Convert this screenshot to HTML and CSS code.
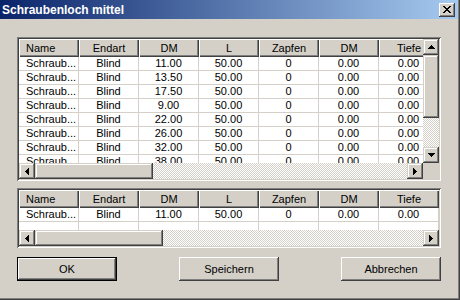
FILE: index.html
```html
<!DOCTYPE html>
<html>
<head>
<meta charset="utf-8">
<link rel="stylesheet" href="styles.css">
</head>
<body>
<div class="window">
  <div class="window-inner">
    <div class="titlebar">
      <span class="title">Schraubenloch mittel</span>
      <button class="close" aria-label="Schließen">
        <svg width="8" height="7" viewBox="0 0 8 7" shape-rendering="crispEdges"><path d="M0 0h2v1h-2zM6 0h2v1h-2zM1 1h2v1h-2zM5 1h2v1h-2zM2 2h4v1h-4zM3 3h2v1h-2zM2 4h4v1h-4zM1 5h2v1h-2zM5 5h2v1h-2zM0 6h2v1h-2zM6 6h2v1h-2z" fill="#000"/></svg>
      </button>
    </div>
    <div class="content">
      <div class="frame frame-top">
        <div class="data">
          <div class="row head">
            <div class="hcell left">Name</div><div class="hcell">Endart</div><div class="hcell">DM</div><div class="hcell">L</div><div class="hcell">Zapfen</div><div class="hcell">DM</div><div class="hcell">Tiefe</div>
          </div>
          <div class="row"><div class="cell left">Schraub...</div><div class="cell">Blind</div><div class="cell">11.00</div><div class="cell">50.00</div><div class="cell">0</div><div class="cell">0.00</div><div class="cell">0.00</div></div>
          <div class="row"><div class="cell left">Schraub...</div><div class="cell">Blind</div><div class="cell">13.50</div><div class="cell">50.00</div><div class="cell">0</div><div class="cell">0.00</div><div class="cell">0.00</div></div>
          <div class="row"><div class="cell left">Schraub...</div><div class="cell">Blind</div><div class="cell">17.50</div><div class="cell">50.00</div><div class="cell">0</div><div class="cell">0.00</div><div class="cell">0.00</div></div>
          <div class="row"><div class="cell left">Schraub...</div><div class="cell">Blind</div><div class="cell">9.00</div><div class="cell">50.00</div><div class="cell">0</div><div class="cell">0.00</div><div class="cell">0.00</div></div>
          <div class="row"><div class="cell left">Schraub...</div><div class="cell">Blind</div><div class="cell">22.00</div><div class="cell">50.00</div><div class="cell">0</div><div class="cell">0.00</div><div class="cell">0.00</div></div>
          <div class="row"><div class="cell left">Schraub...</div><div class="cell">Blind</div><div class="cell">26.00</div><div class="cell">50.00</div><div class="cell">0</div><div class="cell">0.00</div><div class="cell">0.00</div></div>
          <div class="row"><div class="cell left">Schraub...</div><div class="cell">Blind</div><div class="cell">32.00</div><div class="cell">50.00</div><div class="cell">0</div><div class="cell">0.00</div><div class="cell">0.00</div></div>
          <div class="row"><div class="cell left">Schraub...</div><div class="cell">Blind</div><div class="cell">38.00</div><div class="cell">50.00</div><div class="cell">0</div><div class="cell">0.00</div><div class="cell">0.00</div></div>
        </div>
        <div class="vscroll">
          <div class="sbtn"><svg width="7" height="4" viewBox="0 0 7 4" shape-rendering="crispEdges"><path d="M3 0h1v1h1v1h1v1h1v1H0v-1h1v-1h1v-1h1z" fill="#000"/></svg></div>
          <div class="thumb thumb-v"></div>
          <div class="track"></div>
          <div class="sbtn"><svg width="7" height="4" viewBox="0 0 7 4" shape-rendering="crispEdges"><path d="M0 0h7v1h-1v1h-1v1h-1v1h-1v-1h-1v-1h-1v-1H0z" fill="#000"/></svg></div>
        </div>
        <div class="hscroll">
          <div class="sbtn"><svg width="4" height="7" viewBox="0 0 4 7" shape-rendering="crispEdges"><path d="M3 0h1v7h-1v-1h-1v-1h-1v-1H0v-1h1v-1h1v-1h1z" fill="#000"/></svg></div>
          <div class="thumb thumb-h1"></div>
          <div class="track"></div>
          <div class="sbtn"><svg width="4" height="7" viewBox="0 0 4 7" shape-rendering="crispEdges"><path d="M0 0h1v1h1v1h1v1h1v1h-1v1h-1v1h-1v1H0z" fill="#000"/></svg></div>
        </div>
        <div class="corner"></div>
      </div>

      <div class="frame frame-bottom">
        <div class="data">
          <div class="row head">
            <div class="hcell left">Name</div><div class="hcell">Endart</div><div class="hcell">DM</div><div class="hcell">L</div><div class="hcell">Zapfen</div><div class="hcell">DM</div><div class="hcell">Tiefe</div>
          </div>
          <div class="row"><div class="cell left">Schraub...</div><div class="cell">Blind</div><div class="cell">11.00</div><div class="cell">50.00</div><div class="cell">0</div><div class="cell">0.00</div><div class="cell">0.00</div></div>
          <div class="row"><div class="cell left"></div><div class="cell"></div><div class="cell"></div><div class="cell"></div><div class="cell"></div><div class="cell"></div><div class="cell"></div></div>
        </div>
        <div class="hscroll">
          <div class="sbtn"><svg width="4" height="7" viewBox="0 0 4 7" shape-rendering="crispEdges"><path d="M3 0h1v7h-1v-1h-1v-1h-1v-1H0v-1h1v-1h1v-1h1z" fill="#000"/></svg></div>
          <div class="thumb thumb-h2"></div>
          <div class="track"></div>
          <div class="sbtn"><svg width="4" height="7" viewBox="0 0 4 7" shape-rendering="crispEdges"><path d="M0 0h1v1h1v1h1v1h1v1h-1v1h-1v1h-1v1H0z" fill="#000"/></svg></div>
        </div>
      </div>

      <div class="buttons">
        <button class="btn btn-default">OK</button>
        <button class="btn">Speichern</button>
        <button class="btn">Abbrechen</button>
      </div>
    </div>
  </div>
</div>
</body>
</html>
```

FILE: styles.css
```css
* { box-sizing: border-box; }
html, body { margin: 0; padding: 0; }
body {
  width: 460px;
  height: 300px;
  overflow: hidden;
  background: #d4d0c8;
  font-family: "Liberation Sans", Arial, sans-serif;
  font-size: 11px;
  color: #000;
}
.window {
  width: 460px;
  height: 300px;
  background: #d4d0c8;
  border-right: 1px solid #404040;
  border-bottom: 1px solid #404040;
}
.window-inner {
  height: 100%;
  border-right: 1px solid #808080;
  border-bottom: 1px solid #808080;
  display: flex;
  flex-direction: column;
}
.titlebar {
  height: 19px;
  flex: none;
  display: flex;
  align-items: center;
  justify-content: space-between;
  padding: 0 3px 0 2px;
  background: linear-gradient(to right, #0a246a, #a6caf0);
}
.title {
  color: #fff;
  font-weight: bold;
  font-size: 12px;
  white-space: nowrap;
}
.close {
  width: 16px;
  height: 14px;
  padding: 0;
  border: 0;
  background: #d4d0c8;
  display: flex;
  align-items: center;
  justify-content: center;
  box-shadow: inset -1px -1px #404040, inset 1px 1px #fff, inset -2px -2px #808080, inset 2px 2px #d4d0c8;
}
.close svg { display: block; margin-left: -1px; }
.content {
  flex: 1;
  padding: 18px 17px 0 17px;
  display: flex;
  flex-direction: column;
}
.frame {
  padding: 2px;
  background: #fff;
  box-shadow: inset 1px 1px #808080, inset -1px -1px #fff, inset 2px 2px #404040, inset -2px -2px #d4d0c8;
  display: grid;
}
.frame-top {
  height: 144px;
  grid-template-columns: 1fr 16px;
  grid-template-rows: 1fr 16px;
}
.frame-bottom {
  height: 60px;
  margin-top: 7px;
  grid-template-columns: 1fr;
  grid-template-rows: 1fr 16px;
}
.data {
  overflow: hidden;
  background: #fff;
  min-width: 0;
}
.row {
  display: grid;
  grid-template-columns: repeat(7, 60px);
  width: 420px;
  height: 14px;
}
.row.head { height: 18px; }
.hcell {
  background: #d4d0c8;
  line-height: 18px;
  text-align: center;
  white-space: nowrap;
  overflow: hidden;
  box-shadow: inset 1px 1px #fff, inset -1px -1px #404040, inset -2px -2px #808080;
}
.cell {
  border-right: 1px solid #d4d0c8;
  border-bottom: 1px solid #d4d0c8;
  line-height: 13px;
  text-align: center;
  white-space: nowrap;
  overflow: hidden;
}
.hcell.left, .cell.left { text-align: left; padding-left: 7px; }
.vscroll {
  display: flex;
  flex-direction: column;
  background: #d4d0c8;
}
.hscroll {
  display: flex;
  background: #d4d0c8;
}
.sbtn {
  width: 16px;
  height: 16px;
  flex: none;
  display: flex;
  align-items: center;
  justify-content: center;
  background: #d4d0c8;
  box-shadow: inset -1px -1px #404040, inset 1px 1px #d4d0c8, inset -2px -2px #808080, inset 2px 2px #fff;
}
.sbtn svg { display: block; }
.thumb {
  flex: none;
  background: #d4d0c8;
  box-shadow: inset -1px -1px #404040, inset 1px 1px #d4d0c8, inset -2px -2px #808080, inset 2px 2px #fff;
}
.thumb-v { height: 63px; width: 16px; }
.thumb-h1 { width: 118px; height: 16px; }
.thumb-h2 { width: 128px; height: 16px; }
.track {
  flex: 1;
  background-color: #fff;
  background-image: repeating-conic-gradient(#d4d0c8 0 25%, #fff 0 50%);
  background-size: 2px 2px;
}
.corner { background: #d4d0c8; }
.buttons {
  margin-top: 9px;
  display: flex;
  justify-content: space-between;
}
.btn {
  width: 100px;
  height: 24px;
  padding: 0;
  border: 0;
  background: #d4d0c8;
  font-family: "Liberation Sans", Arial, sans-serif;
  font-size: 11px;
  color: #000;
  box-shadow: inset -1px -1px #404040, inset 1px 1px #fff, inset -2px -2px #808080, inset 2px 2px #d4d0c8;
}
.btn-default { border: 1px solid #000; }
```
